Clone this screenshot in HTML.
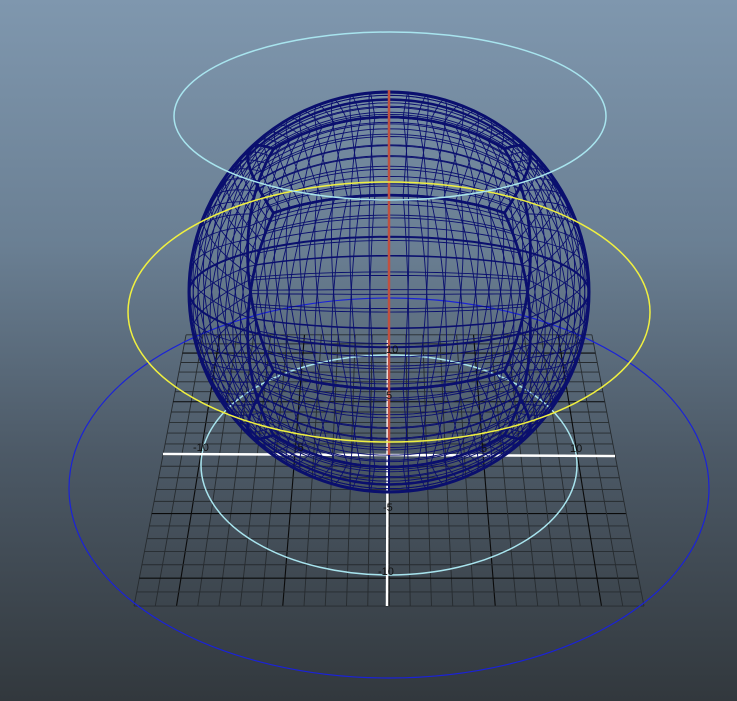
<!DOCTYPE html>
<html><head><meta charset="utf-8"><style>
html,body{margin:0;padding:0;width:737px;height:701px;overflow:hidden}
body{background:linear-gradient(#7f97ae 0%,#6a7f93 35%,#4c5966 65%,#32383d 100%)}
svg{position:absolute;left:0;top:0}
text{font-family:"Liberation Sans",sans-serif;font-size:11px;fill:#111}
</style></head><body>
<svg id="s" width="737" height="701" xmlns="http://www.w3.org/2000/svg">
<g id="grid"></g>
<ellipse cx="389" cy="488" rx="320" ry="190" fill="none" stroke="#1a22d8" stroke-width="1.2"/>
<ellipse cx="389" cy="465" rx="188" ry="110" fill="none" stroke="#a8e4ee" stroke-width="1.5"/>
<line x1="163" y1="454" x2="615" y2="456" stroke="#fff" stroke-width="2.5"/>
<line x1="388" y1="340" x2="387" y2="606" stroke="#fff" stroke-width="2.5"/>
<g id="sph"></g>
<line x1="389" y1="90" x2="389" y2="455" stroke="#c05040" stroke-width="2.5"/>
<ellipse cx="389" cy="312" rx="261" ry="130" fill="none" stroke="#f0f040" stroke-width="1.5"/>
<ellipse cx="390" cy="116" rx="216" ry="84" fill="none" stroke="#a8e4ee" stroke-width="1.5"/>
<text x="193" y="451">-10</text><text x="570" y="452">10</text>
<text x="294" y="451">-5</text><text x="481" y="452">5</text>
<text x="383" y="511">-5</text><text x="378" y="575">-10</text>
<text x="386" y="353">10</text><text x="386" y="399">5</text>
</svg>
<script>
var NS="http://www.w3.org/2000/svg";
function L(g,x1,y1,x2,y2,c,w){var l=document.createElementNS(NS,"line");l.setAttribute("x1",x1);l.setAttribute("y1",y1);l.setAttribute("x2",x2);l.setAttribute("y2",y2);l.setAttribute("stroke",c);l.setAttribute("stroke-width",w);g.appendChild(l);}
function P(x,z){var inv=1/226+(1/255-1/226)*z/12;var s=1/inv;return [389+x*s/12,-722+1177*s/226];}
var g=document.getElementById("grid");
for(var i=-12;i<=12;i++){var maj=i%5==0;var c=maj?"#0a0a0a":"#262b2f",w=maj?1.1:0.9;
var a=P(i,-12),b=P(i,12);L(g,a[0],a[1],b[0],b[1],c,w);
a=P(-12,i);b=P(12,i);L(g,a[0],a[1],b[0],b[1],c,w);}
var sg=document.getElementById("sph");var cx=389,cy=292,R=200,t=0.28,ct=Math.cos(t),st=Math.sin(t);
function proj(v){var n=Math.hypot(v[0],v[1],v[2]);var x=v[0]/n,y=v[1]/n,z=v[2]/n;
var y2=y*ct-z*st;return [cx+x*R,cy-y2*R];}
function poly(pts,w){var p=document.createElementNS(NS,"polyline");p.setAttribute("points",pts.map(function(q){return q[0].toFixed(1)+","+q[1].toFixed(1)}).join(" "));p.setAttribute("fill","none");p.setAttribute("stroke","#0a0f6e");p.setAttribute("stroke-width",w);sg.appendChild(p);}
var faces=[[0,1,2,1],[0,1,2,-1],[0,2,1,1],[0,2,1,-1],[1,2,0,1],[1,2,0,-1]];
var N=20;
faces.forEach(function(f){
 for(var k=0;k<=N;k++){var a=-1+2*k/N;var thick=(k==0||k==N)?2.6:(k==N/2?2:0.9);
  for(var d=0;d<2;d++){var pts=[];
   for(var m=0;m<=30;m++){var b=-1+2*m/30;var v=[0,0,0];
    v[f[0]]=d?a:b;v[f[1]]=d?b:a;v[f[2]]=f[3];pts.push(proj(v));}
   poly(pts,thick);}}
});
var c=document.createElementNS(NS,"circle");c.setAttribute("cx",cx);c.setAttribute("cy",cy);c.setAttribute("r",R);c.setAttribute("fill","none");c.setAttribute("stroke","#0a0f6e");c.setAttribute("stroke-width",3);sg.appendChild(c);
</script>
</body></html>
